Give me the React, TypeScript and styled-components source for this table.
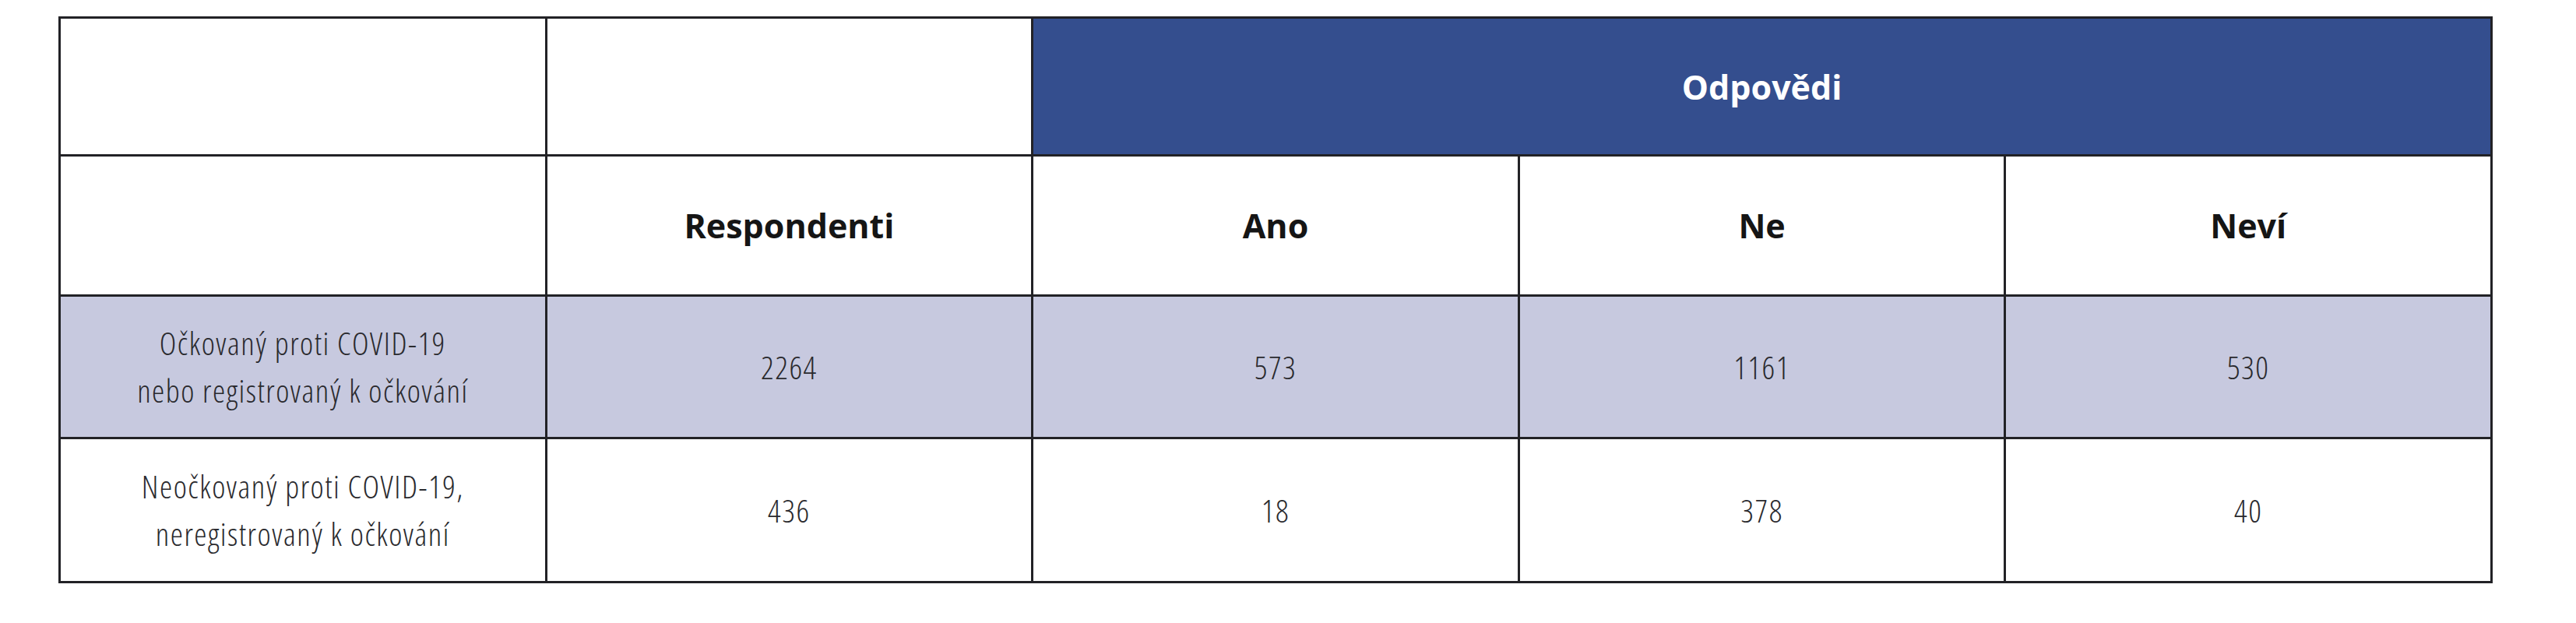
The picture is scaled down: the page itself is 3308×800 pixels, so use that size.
import React from 'react';
import styled, { createGlobalStyle } from 'styled-components';

const GlobalStyle = createGlobalStyle`
  html, body {
    margin: 0;
    padding: 0;
    background: #ffffff;
  }
`;

const Page = styled.div`
  padding: 21px 0 0 75px;
`;

const Table = styled.table`
  width: 3126px;
  table-layout: fixed;
  border-collapse: collapse;
  border: 3px solid #222226;
`;

const Row = styled.tr<{ $height: number; $shaded?: boolean }>`
  height: ${props => props.$height}px;
  background-color: ${props => (props.$shaded ? '#c7c9df' : '#ffffff')};
`;

const HeadCell = styled.th<{ $accent?: boolean }>`
  border: 3px solid #222226;
  padding: 0;
  text-align: center;
  vertical-align: middle;
  font-family: 'Open Sans', 'Liberation Sans', sans-serif;
  font-weight: 700;
  font-size: 43px;
  color: ${props => (props.$accent ? '#ffffff' : '#151515')};
  background-color: ${props => (props.$accent ? '#344e8e' : 'transparent')};
`;

const Cell = styled.td`
  border: 3px solid #222226;
  padding: 0;
  text-align: center;
  vertical-align: middle;
  font-family: 'Open Sans', 'Liberation Sans', sans-serif;
  font-weight: 300;
  font-stretch: 75%;
  font-size: 41px;
  letter-spacing: 1.5px;
  line-height: 61px;
  color: #2a2a2e;
`;

const Line = styled.span`
  display: block;
`;

const rows = [
  { label: ['Očkovaný proti COVID-19', 'nebo registrovaný k očkování'], values: [2264, 573, 1161, 530], shaded: true, height: 183 },
  { label: ['Neočkovaný proti COVID-19,', 'neregistrovaný k očkování'], values: [436, 18, 378, 40], shaded: false, height: 185 },
];

export default function App() {
  return (
    <>
      <GlobalStyle />
      <Page>
        <Table>
          <thead>
            <Row $height={177}>
              <HeadCell />
              <HeadCell />
              <HeadCell colSpan={3} $accent>Odpovědi</HeadCell>
            </Row>
            <Row $height={180}>
              <HeadCell />
              <HeadCell>Respondenti</HeadCell>
              <HeadCell>Ano</HeadCell>
              <HeadCell>Ne</HeadCell>
              <HeadCell>Neví</HeadCell>
            </Row>
          </thead>
          <tbody>
            {rows.map(row => (
              <Row key={row.label[0]} $height={row.height} $shaded={row.shaded}>
                <Cell>
                  {row.label.map(text => <Line key={text}>{text}</Line>)}
                </Cell>
                {row.values.map((value, i) => <Cell key={i}>{value}</Cell>)}
              </Row>
            ))}
          </tbody>
        </Table>
      </Page>
    </>
  );
}
